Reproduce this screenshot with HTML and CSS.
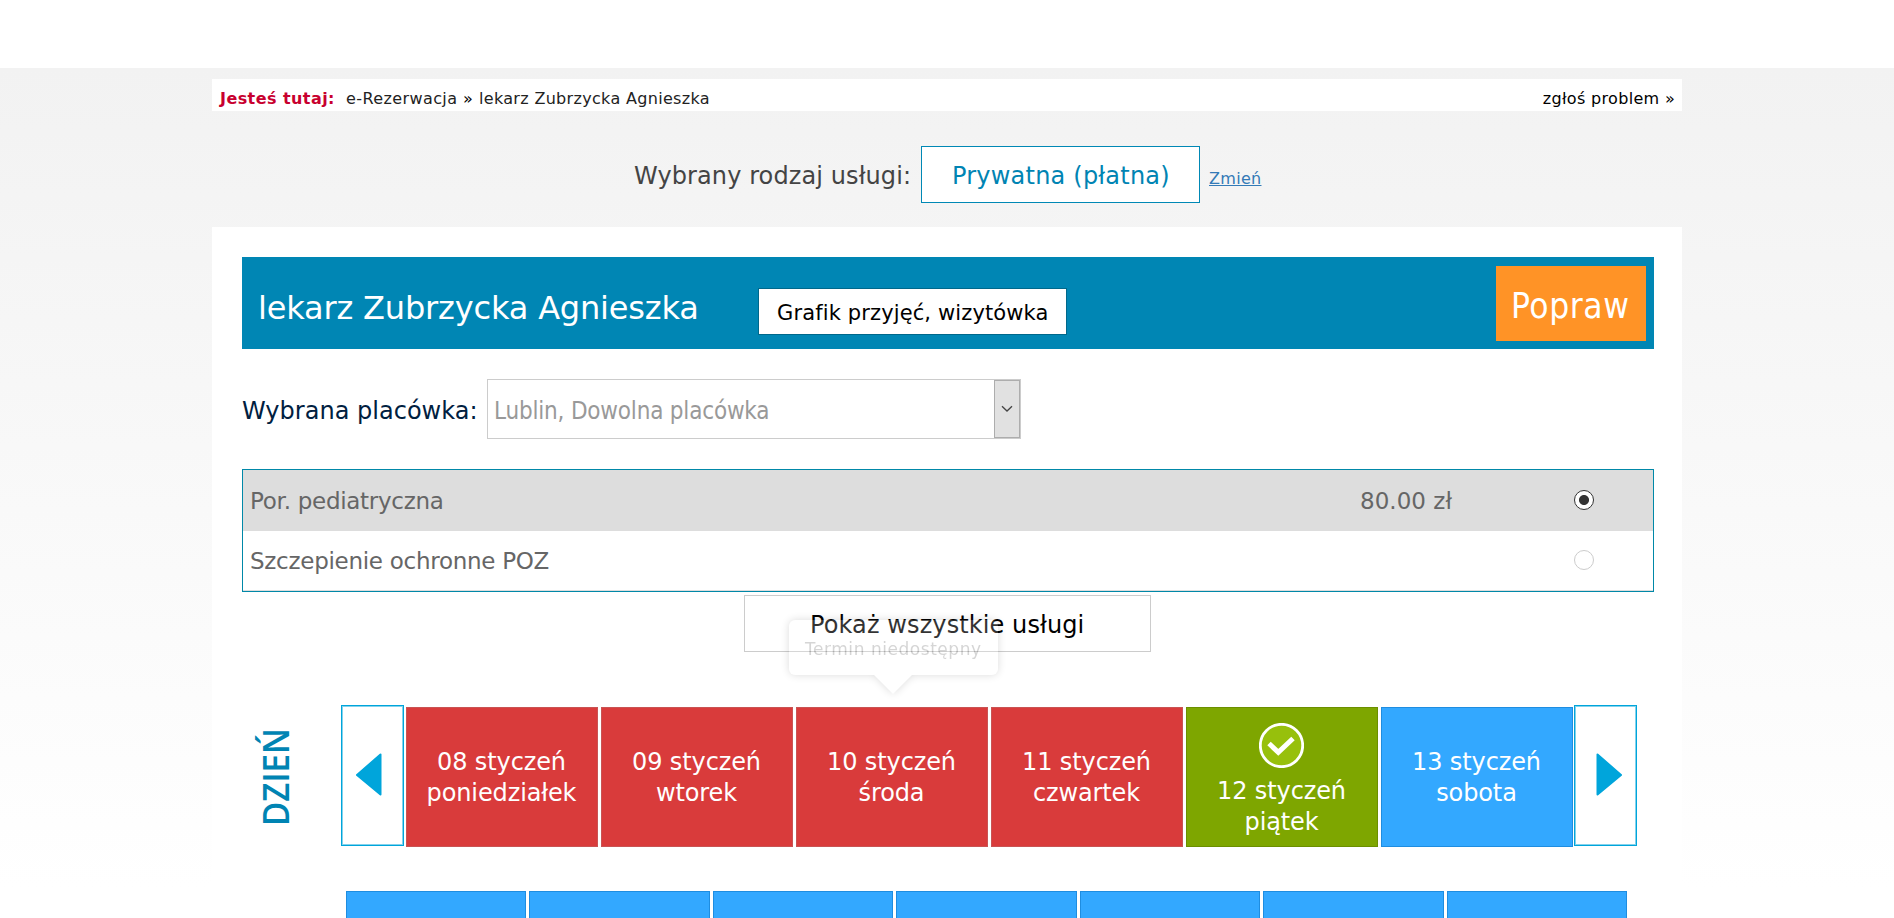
FILE: index.html
```
<!DOCTYPE html>
<html lang="pl">
<head>
<meta charset="utf-8">
<title>e-Rezerwacja</title>
<link rel="stylesheet" href="styles.css">
</head>
<body>
<div class="page">
  <nav class="crumbs">
    <strong class="crumbs-label">Jesteś tutaj:</strong>
    <a class="crumb crumb-home">e-Rezerwacja</a>
    <span class="crumb-sep">»</span>
    <a class="crumb">lekarz Zubrzycka Agnieszka</a>
    <a class="report">zgłoś problem »</a>
  </nav>

  <div class="service">
    <span class="service-label">Wybrany rodzaj usługi:</span>
    <span class="service-type">Prywatna (płatna)</span>
    <a class="service-change">Zmień</a>
  </div>

  <main class="panel">
    <header class="doctor">
      <h1 class="doctor-name">lekarz Zubrzycka Agnieszka</h1>
      <a class="doctor-schedule">Grafik przyjęć, wizytówka</a>
      <a class="doctor-edit">Popraw</a>
    </header>

    <div class="place">
      <span class="place-label">Wybrana placówka:</span>
      <div class="select">
        <span class="select-value">Lublin, Dowolna placówka</span>
        <span class="select-button">
          <svg width="12" height="8" viewBox="0 0 12 8"><path d="M1 1.2 6 6 11 1.2" fill="none" stroke="#444" stroke-width="1.3"/></svg>
        </span>
      </div>
    </div>

    <div class="services">
      <div class="row row-selected">
        <span>Por. pediatryczna</span>
        <span class="price">80.00 zł</span>
        <span class="radio radio-on"></span>
      </div>
      <div class="row">
        <span>Szczepienie ochronne POZ</span>
        <span></span>
        <span class="radio"></span>
      </div>
    </div>

    <div class="show-all-wrap">
      <a class="show-all">Pokaż wszystkie usługi</a>
      <div class="tooltip">Termin niedostępny
        <svg class="tooltip-arrow" width="60" height="34" viewBox="0 0 60 34"><path d="M10 0 30 20 50 0z" fill="#fff"/></svg>
      </div>
    </div>

    <section class="week">
      <svg class="week-label" width="99" height="141" viewBox="0 0 99 141">
        <text transform="translate(46.500 121) rotate(-90)" textLength="98" lengthAdjust="spacingAndGlyphs">DZIEŃ</text>
      </svg>
      <a class="arrow arrow-prev">
        <svg width="27" height="43" viewBox="0 0 27 43"><path d="M25.500 1.500V41.500L2 22z" fill="#00a5db" stroke="#00a5db" stroke-width="2" stroke-linejoin="round"/></svg>
      </a>
      <div class="days">
        <div class="day day-off">08 styczeń<br>poniedziałek</div>
        <div class="day day-off">09 styczeń<br>wtorek</div>
        <div class="day day-off">10 styczeń<br>środa</div>
        <div class="day day-off">11 styczeń<br>czwartek</div>
        <div class="day day-picked">
          <svg class="check" width="45" height="45" viewBox="0 0 45 45"><circle cx="22.500" cy="22.500" r="21.200" fill="#97c00c" stroke="#fff" stroke-width="2.800"/><path d="M10 20.500 19.300 29.300 34 15.500" fill="none" stroke="#fff" stroke-width="5"/></svg>
          12 styczeń<br>piątek
        </div>
        <div class="day">13 styczeń<br>sobota</div>
      </div>
      <a class="arrow arrow-next">
        <svg width="27" height="43" viewBox="0 0 27 43"><path d="M1.500 1.500V41.500L25 22z" fill="#00a5db" stroke="#00a5db" stroke-width="2" stroke-linejoin="round"/></svg>
      </a>
    </section>

    <section class="hours">
      <div class="hour"></div><div class="hour"></div><div class="hour"></div><div class="hour"></div><div class="hour"></div><div class="hour"></div><div class="hour"></div>
    </section>
  </main>
</div>
</body>
</html>
```
FILE: styles.css
```
* { box-sizing: border-box; }

body {
  margin: 0;
  height: 918px;
  overflow: hidden;
  font: 24px "DejaVu Sans", sans-serif;
  letter-spacing: .1px;
  color: #000;
  background: linear-gradient(#f2f2f2, #fff) 0 68px / 100% 820px no-repeat #fff;
}

.page { width: 1470px; margin-left: 212px; padding-top: 79px; }

.crumbs {
  display: flex;
  height: 32px;
  padding: 4px 7px 0 8px;
  font-size: 16px;
  line-height: 31px;
  letter-spacing: .32px;
  background: #fff;
  white-space: nowrap;
}
.crumbs-label { width: 126px; color: #c8002f; letter-spacing: .43px; }
.crumb { color: #222; }
.crumb-home { width: 117px; letter-spacing: .4px; }
.crumb-sep { width: 16px; }
.report { margin-left: auto; }

.service {
  display: flex;
  align-items: baseline;
  height: 116px;
  padding: 35px 0 0 422px;
  white-space: nowrap;
}
.service-label { width: 287px; color: #444; }
.service-type {
  width: 279px;
  height: 57px;
  padding: 3px 0 0 30px;
  border: 1px solid #0088b5;
  background: #fff;
  color: #0084b3;
  line-height: 52px;
  letter-spacing: .21px;
}
.service-change {
  margin-left: 9px;
  font-size: 16px;
  letter-spacing: .3px;
  color: #337ab7;
  text-decoration: underline;
}

.panel { height: 691px; padding: 30px 28px 0 30px; background: #fff; }

.doctor {
  display: flex;
  align-items: flex-start;
  height: 92px;
  padding-left: 16px;
  background: #0086b4;
  color: #fff;
  white-space: nowrap;
}
.doctor-name {
  width: 500px;
  margin: 11px 0 0;
  font-size: 32px;
  font-weight: normal;
  line-height: 80px;
  letter-spacing: -.17px;
}
.doctor-schedule {
  width: 309px;
  height: 47px;
  margin-top: 31px;
  padding: 3px 0 0 18px;
  border: 1px solid #00688b;
  background: #fff;
  color: #000;
  font-size: 21px;
  line-height: 43px;
  letter-spacing: .13px;
}
.doctor-edit {
  width: 150px;
  height: 75px;
  margin: 9px 8px 0 auto;
  padding: 5px 0 0 15px;
  background: #ff9326;
  font-family: "DejaVu Sans Condensed", sans-serif;
  font-size: 35px;
  line-height: 71px;
  letter-spacing: .6px;
}

.place { display: flex; height: 60px; margin-top: 30px; white-space: nowrap; }
.place-label {
  width: 245px;
  padding-top: 4px;
  color: #002040;
  line-height: 57px;
  letter-spacing: .02px;
}
.select {
  display: flex;
  justify-content: space-between;
  width: 534px;
  border: 1px solid #ccc;
  background: #fff;
}
.select-value {
  height: 58px;
  padding: 3px 0 0 6px;
  color: #999;
  font-family: "DejaVu Sans Condensed", sans-serif;
  line-height: 57px;
  letter-spacing: -.19px;
}
.select-button {
  display: flex;
  align-items: center;
  justify-content: center;
  width: 26px;
  padding-bottom: 1px;
  border: 1px solid #adadad;
  background: #e1e1e1;
}

.services {
  height: 123px;
  margin-top: 30px;
  border: 1px solid #0088a8;
}
.row {
  display: grid;
  grid-template-columns: 1110px 214px auto;
  height: 60px;
  padding-left: 7px;
  border-bottom: 1px solid #ddd;
  color: #666;
  font-size: 23px;
  line-height: 60px;
  letter-spacing: -.28px;
}
.row-selected { height: 61px; line-height: 62px; background: #ddd; }
.price { letter-spacing: .03px; }
.radio {
  width: 20px;
  height: 20px;
  margin-top: 19px;
  border: 1px solid #ccc;
  border-radius: 50%;
  background: #fff;
}
.radio-on {
  margin-top: 20px;
  border-color: #333;
  background: radial-gradient(circle, #333 4.6px, #fff 5.4px);
}

.show-all-wrap { position: relative; height: 57px; margin-top: 3px; }
.show-all {
  display: block;
  width: 407px;
  height: 57px;
  margin-left: 502px;
  padding: 3px 0 0 65px;
  border: 1px solid #ccc;
  line-height: 53px;
}
.tooltip {
  position: absolute;
  left: 547px;
  top: 25px;
  width: 209px;
  height: 55px;
  padding: 3px 0 0 16px;
  border-radius: 6px;
  background: #fff;
  filter: drop-shadow(0 0 4px rgba(0, 0, 0, .7));
  opacity: .2;
  color: #333;
  font-size: 17px;
  line-height: 52px;
  letter-spacing: .54px;
  white-space: nowrap;
}
.tooltip-arrow { position: absolute; left: 74px; top: 54px; }

.week { display: flex; height: 142px; margin-top: 53px; }
.week-label text {
  fill: #0084b3;
  font: 600 36px "Open Sans", sans-serif;
  letter-spacing: 0;
}
.arrow {
  display: flex;
  align-items: center;
  width: 63px;
  height: 141px;
  padding: 0 0 3px 13px;
  border: 1px solid #00a5db;
  box-shadow: inset 0 0 0 1px #84d2ec;
}
.arrow-next { padding-left: 21px; }
.days {
  display: grid;
  grid-template-columns: repeat(6, 192px);
  gap: 3px;
  margin: 2px 1px 0 2px;
}
.day {
  height: 140px;
  padding: 39px 1px 0 0;
  border: 1px solid #1f8de0;
  background: #33a8ff;
  color: #fff;
  line-height: 31px;
  letter-spacing: -.12px;
  text-align: center;
}
.day-off { background: #d93b3b; border-color: #c95353; }
.day-picked { padding-top: 15px; background: #7ea600; border-color: #6b8f00; }
.check { display: block; margin: 0 auto 8px; }

.hours {
  display: grid;
  grid-template-columns: repeat(7, 1fr);
  gap: 3px;
  width: 1281px;
  height: 27px;
  margin: 44px 0 0 104px;
}
.hour { border: 1px solid #1f8de0; border-bottom: 0; background: #33a8ff; }
```
